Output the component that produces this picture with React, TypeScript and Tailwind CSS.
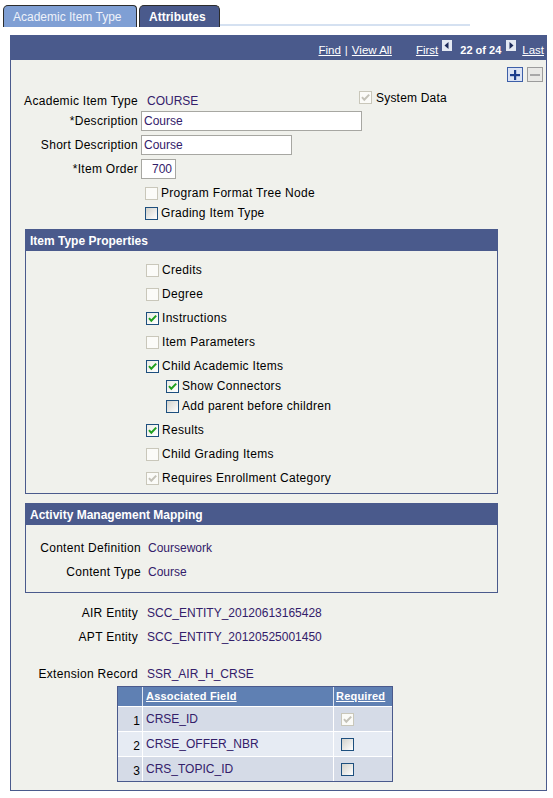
import React from "react";

type CBState = "on" | "off" | "dison" | "disoff";

function Check({ state }: { state: CBState }) {
  const enabled = state === "on" || state === "off";
  const checked = state === "on" || state === "dison";
  const box = enabled
    ? state === "off"
      ? "border-[#1d4f7e] bg-linear-to-br from-[#d2d2cc] to-white"
      : "border-[#1d4f7e] bg-linear-to-br from-[#ececE6] to-white"
    : "border-[#c9c7ba] bg-[#fbfbf8]";
  return (
    <span className={`relative inline-block h-[13px] w-[13px] shrink-0 border ${box}`}>
      {checked && (
        <svg viewBox="0 0 11 11" className="absolute left-0 top-0 h-[11px] w-[11px]">
          <path
            d="M2 5.2 L4.3 7.8 L9.2 2.6"
            fill="none"
            stroke={enabled ? "#1fa01f" : "#c4c2b8"}
            strokeWidth="2"
          />
        </svg>
      )}
    </span>
  );
}

function CheckRow({ state, label, indent, mt }: { state: CBState; label: string; indent: string; mt: string }) {
  return (
    <div className={`flex h-[13px] items-center ${indent} ${mt}`}>
      <Check state={state} />
      <span className="ml-[3px] leading-[13px] tracking-[0.3px] text-black">{label}</span>
    </div>
  );
}

function Arrow({ dir }: { dir: "l" | "r" }) {
  return (
    <svg width="10" height="11" viewBox="0 0 10 11" className="shrink-0">
      <rect x="0" y="0" width="10" height="11" fill="#e4e9f2" />
      {dir === "l" ? (
        <polygon points="6.5,2 6.5,9 2.5,5.5" fill="#1d2b5a" />
      ) : (
        <polygon points="3.5,2 3.5,9 7.5,5.5" fill="#1d2b5a" />
      )}
    </svg>
  );
}

export default function App() {
  const val = "text-[#33206a]";
  return (
    <div className="relative h-[798px] w-[553px] overflow-hidden bg-white font-['Liberation_Sans',Arial,sans-serif] text-[12px] text-black">
      {/* Tabs */}
      <div className="flex h-[27px] items-end pl-[3px] pt-[5px]">
        <div className="flex h-[22px] w-[134px] items-center rounded-tl-[5px] rounded-tr-[4px] border-l border-r border-t border-[#2c2c2c] bg-[#7f9fd4] pl-[9px] text-[#eef2fa]">
          Academic Item Type
        </div>
        <div className="ml-[2px] flex h-[22px] w-[81px] items-center rounded-t-[5px] border-l border-r border-t border-[#2c2c2c] bg-[#4a5a8c] pl-[9px] font-bold text-white">
          Attributes
        </div>
        <div className="mb-[1px] h-[2px] w-[250px] bg-[#d5e1f1]" />
      </div>

      {/* Panel */}
      <div className="ml-[10px] mt-[8px] w-[537px]">
        <div className="flex h-[25px] items-start justify-end bg-[#4a5a8c] pr-[3px] pt-[5px] text-[11.5px] text-white">
          <span className="mt-[2px] underline">Find</span>
          <span className="mx-[4px] mt-[2px]">|</span>
          <span className="mt-[2px] underline">View All</span>
          <span className="ml-[24px] mt-[2px] underline">First</span>
          <span className="ml-[4px]">
            <Arrow dir="l" />
          </span>
          <span className="ml-[8px] mt-[2px] text-[11px] font-bold">22 of 24</span>
          <span className="ml-[5px]">
            <Arrow dir="r" />
          </span>
          <span className="ml-[6px] mt-[2px] underline">Last</span>
        </div>

        <div className="h-[731px] border-b border-l border-r border-[#4a5a8c] bg-[#f0f1ec]">
          {/* plus / minus */}
          <div className="flex justify-end pr-[3px] pt-[7px]">
            <div className="flex h-[15px] w-[16px] items-center justify-center border border-[#3d5fa8] bg-[#dbe3f4]">
              <svg width="10" height="10" viewBox="0 0 10 10">
                <rect x="4" y="0" width="2.2" height="10" fill="#1c3d8c" />
                <rect x="0" y="4" width="10" height="2.2" fill="#1c3d8c" />
              </svg>
            </div>
            <div className="ml-[4px] flex h-[15px] w-[16px] items-center justify-center border border-[#9c9c9c] bg-[#e9e9e6]">
              <svg width="10" height="10" viewBox="0 0 10 10">
                <rect x="0" y="4" width="10" height="2" fill="#a8a8a8" />
              </svg>
            </div>
          </div>

          {/* Academic Item Type + System Data */}
          <div className="mt-[9px] flex h-[17px] items-start">
            <div className="mt-[3px] flex w-[348px] leading-[14px]">
              <span className="w-[127px] text-right tracking-[0.3px]">Academic Item Type</span>
              <span className={`ml-[9px] ${val}`}>COURSE</span>
            </div>
            <div className="flex h-[13px] items-center">
              <Check state="dison" />
              <span className="ml-[4px] tracking-[0.2px]">System Data</span>
            </div>
          </div>

          {/* Description */}
          <div className="mt-[3px] flex items-center">
            <span className="w-[127px] text-right tracking-[0.3px]">*Description</span>
            <div className={`ml-[3px] flex h-[20px] w-[221px] items-center border border-[#a7a7a2] bg-white pl-[2px] ${val}`}>
              Course
            </div>
          </div>
          <div className="mt-[4px] flex items-center">
            <span className="w-[127px] text-right tracking-[0.3px]">Short Description</span>
            <div className={`ml-[3px] flex h-[20px] w-[151px] items-center border border-[#a7a7a2] bg-white pl-[2px] ${val}`}>
              Course
            </div>
          </div>
          <div className="mt-[4px] flex items-center">
            <span className="w-[127px] text-right tracking-[0.3px]">*Item Order</span>
            <div className={`ml-[3px] flex h-[20px] w-[35px] items-center justify-end border border-[#a7a7a2] bg-white pr-[3px] ${val}`}>
              700
            </div>
          </div>

          <CheckRow state="disoff" label="Program Format Tree Node" indent="pl-[134px]" mt="mt-[8px]" />
          <CheckRow state="off" label="Grading Item Type" indent="pl-[134px]" mt="mt-[7px]" />

          {/* Item Type Properties */}
          <div className="ml-[14px] mt-[9px] h-[265px] w-[473px] border border-[#4a5a8c]">
            <div className="flex h-[21px] items-center bg-[#4a5a8c] pl-[4px] font-bold text-white">Item Type Properties</div>
            <div className="pt-[13px]">
              <CheckRow state="disoff" label="Credits" indent="pl-[120px]" mt="" />
              <CheckRow state="disoff" label="Degree" indent="pl-[120px]" mt="mt-[11px]" />
              <CheckRow state="on" label="Instructions" indent="pl-[120px]" mt="mt-[11px]" />
              <CheckRow state="disoff" label="Item Parameters" indent="pl-[120px]" mt="mt-[11px]" />
              <CheckRow state="on" label="Child Academic Items" indent="pl-[120px]" mt="mt-[11px]" />
              <CheckRow state="on" label="Show Connectors" indent="pl-[140px]" mt="mt-[7px]" />
              <CheckRow state="off" label="Add parent before children" indent="pl-[140px]" mt="mt-[7px]" />
              <CheckRow state="on" label="Results" indent="pl-[120px]" mt="mt-[11px]" />
              <CheckRow state="disoff" label="Child Grading Items" indent="pl-[120px]" mt="mt-[11px]" />
              <CheckRow state="dison" label="Requires Enrollment Category" indent="pl-[120px]" mt="mt-[11px]" />
            </div>
          </div>

          {/* Activity Management Mapping */}
          <div className="ml-[14px] mt-[9px] h-[90px] w-[473px] border border-[#4a5a8c]">
            <div className="flex h-[21px] items-center bg-[#4a5a8c] pl-[4px] font-bold text-white">Activity Management Mapping</div>
            <div className="mt-[16px] flex leading-[14px]">
              <span className="w-[115px] text-right tracking-[0.3px]">Content Definition</span>
              <span className={`ml-[7px] ${val}`}>Coursework</span>
            </div>
            <div className="mt-[10px] flex leading-[14px]">
              <span className="w-[115px] text-right tracking-[0.3px]">Content Type</span>
              <span className={`ml-[7px] ${val}`}>Course</span>
            </div>
          </div>

          {/* Entities */}
          <div className="mt-[13px] flex leading-[14px]">
            <span className="w-[127px] text-right tracking-[0.3px]">AIR Entity</span>
            <span className={`ml-[9px] ${val}`}>SCC_ENTITY_20120613165428</span>
          </div>
          <div className="mt-[10px] flex leading-[14px]">
            <span className="w-[127px] text-right tracking-[0.3px]">APT Entity</span>
            <span className={`ml-[9px] ${val}`}>SCC_ENTITY_20120525001450</span>
          </div>
          <div className="mt-[23px] flex leading-[14px]">
            <span className="w-[127px] text-right tracking-[0.3px]">Extension Record</span>
            <span className={`ml-[9px] ${val}`}>SSR_AIR_H_CRSE</span>
          </div>

          {/* Grid */}
          <div className="ml-[106px] mt-[5px] w-[276px] border border-[#4a5a8c]">
            <div className="flex h-[19px] bg-[#5f80b3] text-[11px] font-bold text-white">
              <div className="w-[25px] border-r border-[#dfe6f1]" />
              <div className="flex w-[191px] items-center border-r border-[#dfe6f1] pl-[3px] underline tracking-[0.2px]">Associated Field</div>
              <div className="flex flex-1 items-center pl-[2px] underline tracking-[0.2px]">Required</div>
            </div>
            {[
              { n: "1", f: "CRSE_ID", s: "dison" as CBState, bg: "bg-[#d5dbe7]" },
              { n: "2", f: "CRSE_OFFER_NBR", s: "off" as CBState, bg: "bg-[#e6ebf3]" },
              { n: "3", f: "CRS_TOPIC_ID", s: "off" as CBState, bg: "bg-[#d5dbe7]" },
            ].map((r) => (
              <div key={r.n} className={`flex h-[25px] border-t border-white ${r.bg}`}>
                <div className="flex w-[25px] items-center justify-end border-r border-white pr-[2px] pt-[3px]">{r.n}</div>
                <div className={`flex w-[191px] items-center border-r border-white pl-[3px] ${val}`}>{r.f}</div>
                <div className="flex flex-1 items-center pl-[7px]">
                  <Check state={r.s} />
                </div>
              </div>
            ))}
          </div>
        </div>
      </div>
    </div>
  );
}
